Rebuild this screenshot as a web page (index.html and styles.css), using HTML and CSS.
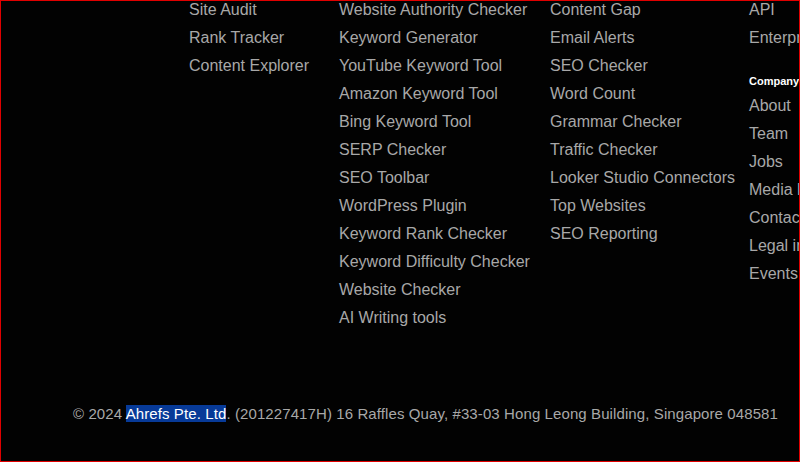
FILE: index.html
```html
<!DOCTYPE html>
<html>
<head>
<meta charset="utf-8">
<link rel="stylesheet" href="styles.css">
</head>
<body>
<div class="frame">
  <div class="cols">
    <ul class="col c1">
      <li>Site Audit</li>
      <li>Rank Tracker</li>
      <li>Content Explorer</li>
    </ul>
    <ul class="col c2">
      <li>Website Authority Checker</li>
      <li>Keyword Generator</li>
      <li>YouTube Keyword Tool</li>
      <li>Amazon Keyword Tool</li>
      <li>Bing Keyword Tool</li>
      <li>SERP Checker</li>
      <li>SEO Toolbar</li>
      <li>WordPress Plugin</li>
      <li>Keyword Rank Checker</li>
      <li>Keyword Difficulty Checker</li>
      <li>Website Checker</li>
      <li>AI Writing tools</li>
    </ul>
    <ul class="col c3">
      <li>Content Gap</li>
      <li>Email Alerts</li>
      <li>SEO Checker</li>
      <li>Word Count</li>
      <li>Grammar Checker</li>
      <li>Traffic Checker</li>
      <li>Looker Studio Connectors</li>
      <li>Top Websites</li>
      <li>SEO Reporting</li>
    </ul>
    <div class="col c4">
      <ul class="group">
        <li>API</li>
        <li>Enterprise</li>
      </ul>
      <div class="heading">Company</div>
      <ul class="group">
        <li>About</li>
        <li>Team</li>
        <li>Jobs</li>
        <li>Media kit</li>
        <li>Contact us</li>
        <li>Legal info</li>
        <li>Events</li>
      </ul>
    </div>
  </div>
  <p class="legal">© 2024 <span class="sel">Ahrefs Pte. Ltd</span>. (201227417H) 16 Raffles Quay, #33-03 Hong Leong Building, Singapore 048581</p>
</div>
</body>
</html>
```
FILE: styles.css
```css
html, body {
  margin: 0;
  padding: 0;
  background: #000;
}
.frame {
  box-sizing: border-box;
  width: 800px;
  height: 462px;
  border: 1px solid #e00000;
  background: #020202;
  overflow: hidden;
  font-family: "Liberation Sans", Arial, sans-serif;
  color: #a8a8a8;
}
.cols {
  display: flex;
  margin-top: -5px;
  padding-left: 188px;
}
.col, .group {
  list-style: none;
  margin: 0;
  padding: 0;
  flex-shrink: 0;
}
.col li {
  font-size: 16px;
  line-height: 28px;
  white-space: nowrap;
}
.c1 { width: 150px; }
.c2 { width: 211px; }
.c3 { width: 199px; }
.c4 { width: 120px; }
.heading {
  margin-top: 21px;
  margin-bottom: 3px;
  font-size: 11px;
  line-height: 16px;
  font-weight: bold;
  color: #fff;
}
.legal {
  margin: 0;
  padding-top: 72px;
  padding-left: 72px;
  font-size: 15px;
  letter-spacing: 0.1px;
  line-height: 20px;
  white-space: nowrap;
}
.sel {
  background: #073a98;
  color: #fff;
}
```
